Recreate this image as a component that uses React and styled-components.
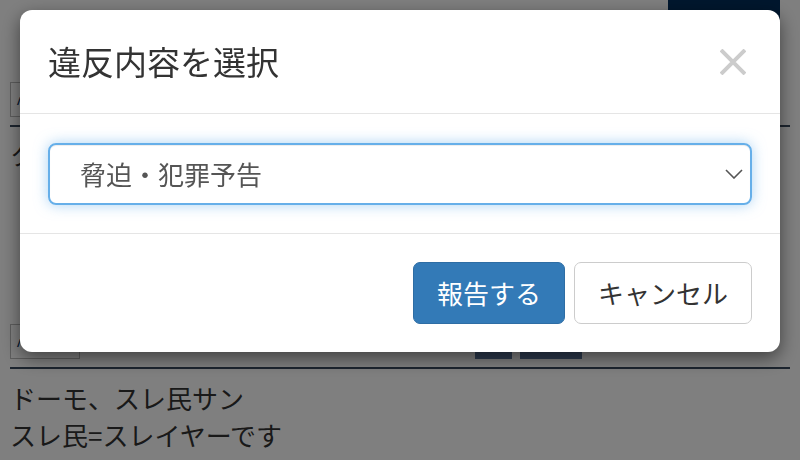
import React from 'react'
import styled, { createGlobalStyle } from 'styled-components'

const GlobalStyle = createGlobalStyle`
  html, body {
    margin: 0;
    padding: 0;
    background: #fff;
  }
  body {
    font-family: "Noto Sans CJK JP", "Noto Sans", sans-serif;
    color: #333;
    font-size: 26px;
    line-height: 1.43;
    overflow: hidden;
  }
`

const Page = styled.div`
  width: 800px;
  height: 460px;
  padding: 0 10px;
  box-sizing: border-box;
`

const TopBar = styled.div`
  display: flex;
  justify-content: flex-end;
  height: 82px;
`

const NavBlock = styled.div`
  width: 112px;
  height: 60px;
  margin-right: 10px;
  background: #002e5c;
`

const Row = styled.div`
  display: flex;
  align-items: flex-end;
  height: 35px;
  padding-bottom: ${p => p.$pb || 0}px;
  border-bottom: 2px solid #3a4a5e;
`

const SmallBox = styled.div`
  width: 70px;
  height: 35px;
  box-sizing: border-box;
  border: 1px solid #bbb;
  font-size: 14px;
  line-height: 33px;
  padding-left: 6px;
  color: #002e5c;
`

const NavButtons = styled.div`
  display: flex;
  gap: 8px;
  margin-left: auto;
  margin-right: 208px;
`

const NavButton = styled.div`
  width: ${p => p.$w}px;
  height: 36px;
  background: #5a749c;
`

const Body = styled.div`
  padding-top: ${p => p.$pt || 0}px;
  height: ${p => p.$h || 'auto'};
`

const Para = styled.p`
  margin: 0;
  white-space: nowrap;
`

const Backdrop = styled.div`
  position: fixed;
  inset: 0;
  background: rgba(0, 0, 0, 0.5);
`

const Dialog = styled.div`
  position: fixed;
  top: 10px;
  left: 20px;
  width: 760px;
  background: #fff;
  border-radius: 12px;
  box-shadow: 0 6px 18px rgba(0, 0, 0, 0.5);
  overflow: hidden;
`

const Header = styled.div`
  display: flex;
  align-items: center;
  justify-content: space-between;
  height: 103px;
  padding: 0 34px 0 28px;
  border-bottom: 1px solid #e5e5e5;
`

const Title = styled.h4`
  margin: 0;
  font-size: 33px;
  font-weight: 400;
  color: #333;
  line-height: 1.43;
`

const Close = styled.button`
  border: 0;
  background: none;
  padding: 0;
  width: 26px;
  height: 26px;
  display: flex;
  cursor: pointer;
`

const Content = styled.div`
  padding: 29px 28px 28px;
`

const SelectBox = styled.div`
  display: flex;
  align-items: center;
  justify-content: space-between;
  height: 62px;
  box-sizing: border-box;
  padding: 0 6px 0 30px;
  border: 2px solid #66afe9;
  border-radius: 8px;
  box-shadow: inset 0 1px 1px rgba(0, 0, 0, 0.075), 0 0 14px rgba(102, 175, 233, 0.55);
  font-size: 26px;
  color: #555;
`

const Chevron = styled.svg`
  width: 18px;
  height: 10px;
  margin-right: 1px;
`

const Footer = styled.div`
  display: flex;
  justify-content: flex-end;
  gap: 9px;
  padding: 28px 28px;
  border-top: 1px solid #e5e5e5;
`

const Button = styled.button`
  height: 62px;
  padding: 0 23px;
  font-family: inherit;
  font-size: 26px;
  line-height: 1;
  border-radius: 7px;
  border: 1px solid ${p => (p.$primary ? '#2e6da4' : '#ccc')};
  background: ${p => (p.$primary ? '#337ab7' : '#fff')};
  color: ${p => (p.$primary ? '#fff' : '#333')};
  cursor: pointer;
`

export default function App() {
  return (
    <>
      <GlobalStyle />
      <Page>
        <TopBar>
          <NavBlock />
        </TopBar>
        <Row $pb={8}>
          <SmallBox>ʌ</SmallBox>
        </Row>
        <Body $pt={8} $h="189px">
          <Para>ク</Para>
        </Body>
        <Row $pb={8}>
          <SmallBox>ʌ</SmallBox>
          <NavButtons>
            <NavButton $w={37} />
            <NavButton $w={62} />
          </NavButtons>
        </Row>
        <Body $pt={10}>
          <Para>ドーモ、スレ民サン</Para>
          <Para>スレ民=スレイヤーです</Para>
        </Body>
      </Page>
      <Backdrop />
      <Dialog>
        <Header>
          <Title>違反内容を選択</Title>
          <Close aria-label="閉じる">
            <svg width="26" height="26" viewBox="0 0 26 26">
              <path d="M1 1 L25 25 M25 1 L1 25" stroke="#cccccc" strokeWidth="4" />
            </svg>
          </Close>
        </Header>
        <Content>
          <SelectBox>
            <span>脅迫・犯罪予告</span>
            <Chevron viewBox="0 0 18 10">
              <polyline points="1,1 9,9 17,1" fill="none" stroke="#555" strokeWidth="1.6" />
            </Chevron>
          </SelectBox>
        </Content>
        <Footer>
          <Button $primary>報告する</Button>
          <Button>キャンセル</Button>
        </Footer>
      </Dialog>
    </>
  )
}
